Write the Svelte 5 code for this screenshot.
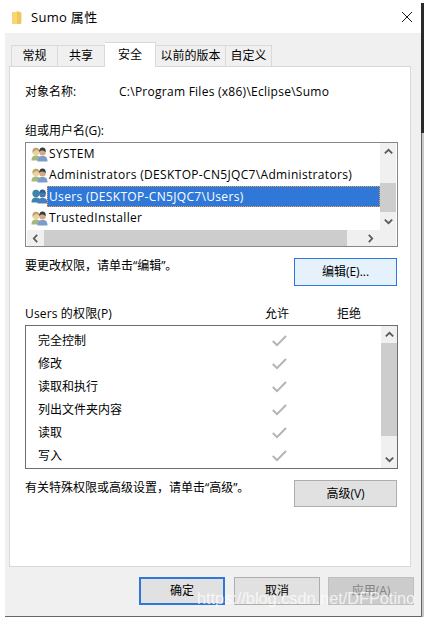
<script>
	const tabs = ['常规', '共享', '安全', '以前的版本', '自定义'];
	const groups = [
		{ name: 'SYSTEM', selected: false },
		{ name: 'Administrators (DESKTOP-CN5JQC7\\Administrators)', selected: false },
		{ name: 'Users (DESKTOP-CN5JQC7\\Users)', selected: true },
		{ name: 'TrustedInstaller', selected: false }
	];
	const permissions = ['完全控制', '修改', '读取和执行', '列出文件夹内容', '读取', '写入'];
</script>

{#snippet chevron(points)}
	<svg class="chevron" width="9" height="9" viewBox="0 0 9 9">
		<polyline {points} fill="none" stroke="#5a5a5a" stroke-width="1.8" />
	</svg>
{/snippet}

{#snippet people(selected)}
	<svg class="people" class:tinted={selected} width="17" height="16" viewBox="0 0 17 16">
		<path class="body-a" d="M0.5 14.5 C0.5 10.5 2.5 9.5 5 9.5 C7.5 9.5 9.5 10.5 9.5 14.5 Z" />
		<circle class="head-a" cx="5" cy="6" r="3.3" />
		<path class="hair-a" d="M1.6 7 C1 2.5 3 1.8 5 1.8 C7 1.8 8.8 2.8 8.4 6 C7.5 4.6 6 4.2 4.6 4.4 C3.4 4.6 2.6 5.4 1.6 7 Z" />
		<path class="body-b" d="M6.5 15.5 C6.5 11 8.5 10 11.5 10 C14.5 10 16.5 11 16.5 15.5 Z" />
		<circle class="head-b" cx="11.5" cy="6.2" r="3.2" />
		<path class="hair-b" d="M8.2 6.2 C8 2.8 9.8 1.6 11.6 1.6 C13.6 1.6 15 3 14.8 6.2 C13.8 4.8 12 4.4 10.6 4.5 C9.6 4.6 8.8 5.2 8.2 6.2 Z" />
	</svg>
{/snippet}

<div class="shot">
	<div class="window">
		<header class="titlebar">
			<svg class="folder" width="10" height="13" viewBox="0 0 10 13">
				<path d="M0 1 H4 L5 0 V13 H0 Z" fill="#f7d774" />
				<path d="M5 0 L9 1.5 V13 H5 Z" fill="#efc75e" />
				<path d="M9 1.5 H10 V12 H9 Z" fill="#fbe9b0" />
			</svg>
			<span class="title">Sumo 属性</span>
			<svg class="close" width="10" height="10" viewBox="0 0 10 10">
				<path d="M0 0 L10 10 M10 0 L0 10" stroke="#1a1a1a" stroke-width="1" fill="none" />
			</svg>
		</header>

		<div class="dialog">
			<div class="tabs">
				{#each tabs as tab, i}
					<div class="tab tab{i}" class:active={i === 2}>{tab}</div>
				{/each}
			</div>

			<div class="page">
				<div class="object-row">
					<span class="object-label">对象名称:</span>
					<span class="object-path">C:\Program Files (x86)\Eclipse\Sumo</span>
				</div>

				<div class="label groups-label">组或用户名(G):</div>
				<div class="listbox groups">
					<div class="rows">
						{#each groups as group}
							<div class="group-row">
								{@render people(group.selected)}
								<span class="group-name" class:selected={group.selected}>{group.name}</span>
							</div>
						{/each}
					</div>
					<div class="vbar">
						<div class="arrow">{@render chevron('0.8,6.4 4.5,2.8 8.2,6.4')}</div>
						<div class="vthumb"></div>
						<div class="arrow bottom">{@render chevron('0.8,2.6 4.5,6.2 8.2,2.6')}</div>
					</div>
					<div class="hbar">
						<div class="harrow">{@render chevron('6.2,0.8 2.8,4.5 6.2,8.2')}</div>
						<div class="hthumb"></div>
						<div class="harrow right">{@render chevron('2.8,0.8 6.2,4.5 2.8,8.2')}</div>
					</div>
				</div>

				<div class="action-row first">
					<span class="label hint">要更改权限，请单击“编辑”。</span>
					<button class="btn side focus">编辑(E)...</button>
				</div>

				<div class="perm-head">
					<span class="label perm-title">Users 的权限(P)</span>
					<span class="label allow">允许</span>
					<span class="label deny">拒绝</span>
				</div>
				<div class="listbox perms">
					<div class="perm-rows">
						{#each permissions as perm}
							<div class="perm-row">
								<span class="perm-name">{perm}</span>
								<svg class="check" width="15" height="12" viewBox="0 0 15 12">
									<polyline points="0.8,6 5,10.2 14,1" fill="none" stroke="#b4b4b4" stroke-width="2" />
								</svg>
							</div>
						{/each}
					</div>
					<div class="vbar tall">
						<div class="arrow">{@render chevron('0.8,6.4 4.5,2.8 8.2,6.4')}</div>
						<div class="vthumb long"></div>
						<div class="arrow bottom">{@render chevron('0.8,2.6 4.5,6.2 8.2,2.6')}</div>
					</div>
				</div>

				<div class="action-row second">
					<span class="label hint">有关特殊权限或高级设置，请单击“高级”。</span>
					<button class="btn side">高级(V)</button>
				</div>
			</div>

			<footer class="footer">
				<button class="btn wide default">确定</button>
				<button class="btn wide cancel">取消</button>
				<button class="btn wide disabled">应用(A)</button>
			</footer>
			<span class="watermark">https://blog.csdn.net/DFPotino</span>
		</div>
	</div>
	<div class="edge">
		<div class="edge-top"></div>
		<div class="edge-rest"></div>
	</div>
</div>

<style>
	:global(body) {
		background: #fff;
	}
	.shot {
		width: 428px;
		height: 618px;
		display: flex;
		background: #fff;
		overflow: hidden;
		color: #000;
		font-family: "Open Sans", "Noto Sans CJK SC", sans-serif;
		font-size: 12px;
		line-height: 16px;
	}
	.window {
		width: 421px;
		height: 617px;
		display: flex;
		flex-direction: column;
	}
	.edge {
		margin-top: 3px;
		width: 3px;
		height: 614px;
		display: flex;
		flex-direction: column;
	}
	.edge-top {
		height: 130px;
		background: #2a2a2a;
	}
	.edge-rest {
		flex: 1;
		background: #c8c8c8;
		border-left: 1px solid #666;
	}
	.titlebar {
		height: 33px;
		flex: none;
		display: flex;
		align-items: center;
		padding-left: 12px;
	}
	.folder {
		margin-top: 2px;
	}
	.title {
		margin-left: 9px;
		font-size: 13px;
		letter-spacing: 0.3px;
	}
	.close {
		margin-left: auto;
		margin-right: 9px;
		margin-top: 1px;
	}
	.dialog {
		position: relative;
		flex: 1;
		margin-left: 5px;
		padding-top: 9px;
		background: #f0f0f0;
		border-bottom: 1px solid #666;
		display: flex;
		flex-direction: column;
	}
	.tabs {
		display: flex;
		height: 24px;
		margin-left: 6px;
		align-items: flex-end;
		position: relative;
		z-index: 1;
	}
	.tab {
		height: 21px;
		box-sizing: border-box;
		margin-bottom: 0;
		border: 1px solid #d9d9d9;
		border-left: none;
		border-bottom: none;
		text-align: center;
		line-height: 20px;
	}
	.tab0 {
		width: 47px;
		border-left: 1px solid #d9d9d9;
	}
	.tab1 {
		width: 47px;
	}
	.tab2 {
		width: 51px;
	}
	.tab3 {
		width: 70px;
	}
	.tab4 {
		width: 46px;
	}
	.tab.active {
		height: 25px;
		margin-bottom: -1px;
		background: #fff;
		border-left: none;
		line-height: 23px;
	}
	.page {
		box-sizing: border-box;
		width: 402px;
		height: 501px;
		margin-left: 4px;
		padding: 17px 13px 0 15px;
		background: #fff;
		border: 1px solid #d9d9d9;
	}
	.object-row {
		display: flex;
	}
	.object-label {
		width: 94px;
	}
	.object-path {
		letter-spacing: 0.26px;
	}
	.label {
		display: block;
	}
	.groups-label {
		margin-top: 23px;
	}
	.listbox {
		box-sizing: border-box;
		width: 373px;
		margin-top: 3px;
		border: 1px solid #828790;
		background: #fff;
	}
	.groups {
		height: 105px;
		display: grid;
		grid-template-columns: 354px 16px;
		grid-template-rows: 87px 16px;
	}
	.rows {
		overflow: hidden;
		white-space: nowrap;
	}
	.group-row {
		height: 21.33px;
		display: flex;
		align-items: center;
		padding-left: 5px;
	}
	.people {
		flex: none;
		margin-right: -1px;
	}
	.body-a {
		fill: #a4b87c;
	}
	.head-a {
		fill: #ecd0a8;
	}
	.hair-a {
		fill: #b9a766;
	}
	.body-b {
		fill: #7d9ccb;
	}
	.head-b {
		fill: #d9a97c;
	}
	.hair-b {
		fill: #333c4a;
	}
	.tinted .body-a,
	.tinted .head-a,
	.tinted .hair-a {
		fill: #3f84a6;
	}
	.tinted .body-b {
		fill: #4a7cc6;
	}
	.tinted .head-b {
		fill: #4279b2;
	}
	.tinted .hair-b {
		fill: #2a5f93;
	}
	.group-name {
		flex: 1;
		padding-left: 2px;
		height: 21px;
		line-height: 22px;
		box-sizing: border-box;
		letter-spacing: 0.33px;
	}
	.group-name.selected {
		background: #3078d7;
		color: #fff;
		outline: 1px dotted #f0a040;
		outline-offset: -1px;
	}
	.vbar {
		background: #f0f0f0;
		display: flex;
		flex-direction: column;
	}
	.arrow {
		height: 17px;
		flex: none;
		display: flex;
		align-items: center;
		justify-content: center;
	}
	.arrow.bottom {
		margin-top: auto;
	}
	.vthumb {
		height: 29px;
		margin-top: 23px;
		background: #cdcdcd;
	}
	.vthumb.long {
		height: 93px;
		margin-top: 0;
	}
	.hbar {
		grid-column: 1 / 3;
		margin-left: 1px;
		background: #f0f0f0;
		display: flex;
	}
	.harrow {
		width: 17px;
		flex: none;
		display: flex;
		align-items: center;
		justify-content: center;
	}
	.harrow.right {
		margin-left: 15px;
	}
	.hthumb {
		width: 303px;
		background: #cdcdcd;
	}
	.chevron {
		display: block;
	}
	.action-row {
		display: flex;
		justify-content: space-between;
		align-items: flex-start;
		margin-top: 10px;
	}
	.hint {
		padding-top: 1px;
	}
	.btn {
		box-sizing: border-box;
		padding: 0;
		margin: 0;
		background: #e1e1e1;
		border: 1px solid #adadad;
		border-radius: 0;
		color: #000;
		font: inherit;
		text-align: center;
	}
	.side {
		width: 103px;
		height: 27px;
		margin-top: 1px;
	}
	.first .side {
		height: 28px;
	}
	.focus {
		background: #e5f1fb;
		border-color: #3078d7;
	}
	.perm-head {
		display: flex;
		margin-top: 20px;
	}
	.perm-title {
		width: 240px;
		letter-spacing: 0.15px;
	}
	.allow {
		width: 72px;
	}
	.perms {
		height: 144px;
		display: flex;
		border-color: #6e6e6e;
	}
	.perm-rows {
		flex: 1;
		padding: 3px 0 0 12px;
	}
	.perm-row {
		height: 23px;
		display: flex;
		align-items: center;
	}
	.perm-name {
		width: 234px;
	}
	.tall {
		width: 16px;
		flex: none;
	}
	.footer {
		display: flex;
		justify-content: flex-end;
		margin-top: 10px;
		padding-right: 7px;
	}
	.wide {
		width: 86px;
		height: 28px;
		margin-left: 8px;
	}
	.default {
		border: 2px solid #3078d7;
	}
	.cancel {
		margin-left: 9px;
	}
	.disabled {
		background: #ccc;
		border-color: #bfbfbf;
		color: #838383;
	}
	.watermark {
		position: absolute;
		left: 192px;
		top: 555px;
		font-family: "Liberation Sans", sans-serif;
		font-size: 16.3px;
		line-height: 20px;
		color: rgba(255, 255, 255, 0.75);
		white-space: nowrap;
		z-index: 2;
	}
</style>
